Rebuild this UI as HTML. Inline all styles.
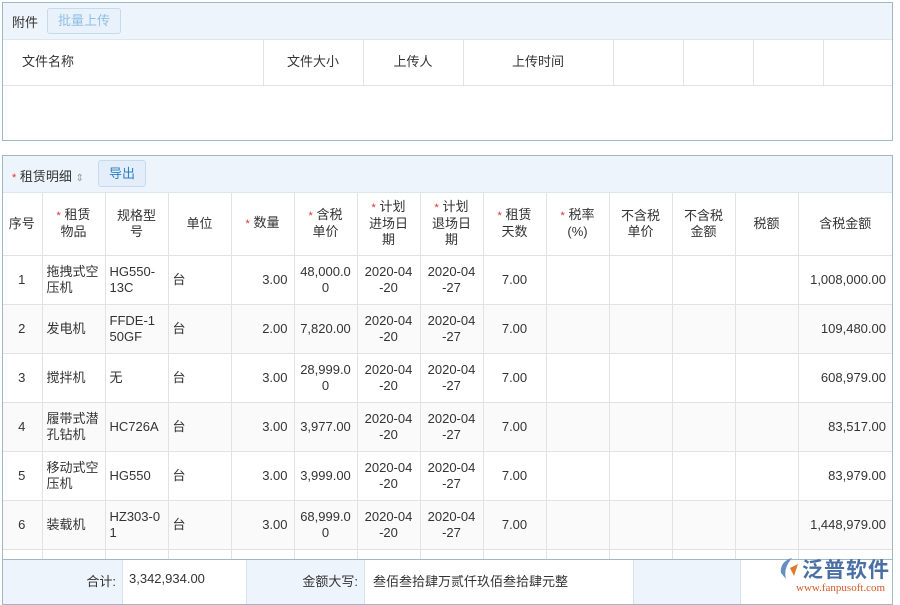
<!DOCTYPE html>
<html><head><meta charset="utf-8"><style>
*{margin:0;padding:0;box-sizing:border-box}
body{width:900px;height:600px;background:#fff;font-family:"Liberation Sans","Noto Sans CJK SC",sans-serif;font-size:13px;color:#333;position:relative;overflow:hidden}
.panel{position:absolute;left:2px;width:891px;border:1px solid #9fb8c8;overflow:hidden}
.bar{background:#eef4fc;border-bottom:1px solid #dde6ee;position:relative}
table{border-collapse:collapse;table-layout:fixed;position:absolute}
td{border:1px solid #e2e2e2;text-align:center;vertical-align:middle;line-height:16px;padding:0 4px}
.s{color:#e03030;font-size:11px}
.btn{position:absolute;border:1px solid #c5daea;border-radius:3px;background:#e3eefa;color:#2b7fc4;text-align:center}
.l{text-align:left}.r{text-align:right;padding-right:6px}
</style></head><body>
<div class="panel" style="top:2px;height:139px">
 <div class="bar" style="height:37px">
  <span style="position:absolute;left:9px;top:9px">附件</span>
  <div class="btn" style="left:44px;top:5px;width:74px;height:26px;line-height:24px;color:#8fc0e6;background:#e9f2fb">批量上传</div>
 </div>
 <table style="left:-1px;top:37px;width:890px">
  <tr style="height:45px"><td class="l" style="width:261px;padding-left:20px;border-left:none;border-top:none">文件名称</td><td style="width:100px;border-top:none">文件大小</td><td style="width:100px;border-top:none">上传人</td><td style="width:150px;border-top:none">上传时间</td><td style="width:70px;border-top:none"></td><td style="width:70px;border-top:none"></td><td style="width:70px;border-top:none"></td><td style="border-top:none;border-right:none"></td></tr>
 </table>
</div>
<div class="panel" style="top:155px;height:450px">
 <div class="bar" style="height:37px">
  <span style="position:absolute;left:9px;top:10px"><span class="s">*</span> 租赁明细 <span style="color:#999;font-size:10px">⇕</span></span>
  <div class="btn" style="left:95px;top:4px;width:48px;height:27px;line-height:25px">导出</div>
 </div>
 <table style="left:-1px;top:37px;width:890px">
  <tr style="height:62px"><td style="width:40px;border-left:none;border-top:none">序号</td><td style="width:63px;border-top:none"><span class="s">*</span> 租赁<br>物品</td><td style="width:63px;border-top:none">规格型<br>号</td><td style="width:63px;border-top:none">单位</td><td style="width:63px;border-top:none"><span class="s">*</span> 数量</td><td style="width:63px;border-top:none"><span class="s">*</span> 含税<br>单价</td><td style="width:63px;border-top:none"><span class="s">*</span> 计划<br>进场日<br>期</td><td style="width:63px;border-top:none"><span class="s">*</span> 计划<br>退场日<br>期</td><td style="width:63px;border-top:none"><span class="s">*</span> 租赁<br>天数</td><td style="width:63px;border-top:none"><span class="s">*</span> 税率<br>(%)</td><td style="width:63px;border-top:none">不含税<br>单价</td><td style="width:63px;border-top:none">不含税<br>金额</td><td style="width:63px;border-top:none">税额</td><td style="border-top:none;border-right:none">含税金额</td></tr>
  <tr style="height:49px"><td style="border-left:none">1</td><td class="l">拖拽式空压机</td><td class="l">HG550-13C</td><td class="l">台</td><td class="r">3.00</td><td>48,000.0<br>0</td><td>2020-04<br>-20</td><td>2020-04<br>-27</td><td>7.00</td><td></td><td></td><td></td><td></td><td class="r" style="border-right:none">1,008,000.00</td></tr>
  <tr style="height:49px;background:#fafafa"><td style="border-left:none">2</td><td class="l">发电机</td><td class="l">FFDE-1<br>50GF</td><td class="l">台</td><td class="r">2.00</td><td>7,820.00</td><td>2020-04<br>-20</td><td>2020-04<br>-27</td><td>7.00</td><td></td><td></td><td></td><td></td><td class="r" style="border-right:none">109,480.00</td></tr>
  <tr style="height:49px"><td style="border-left:none">3</td><td class="l">搅拌机</td><td class="l">无</td><td class="l">台</td><td class="r">3.00</td><td>28,999.0<br>0</td><td>2020-04<br>-20</td><td>2020-04<br>-27</td><td>7.00</td><td></td><td></td><td></td><td></td><td class="r" style="border-right:none">608,979.00</td></tr>
  <tr style="height:49px;background:#fafafa"><td style="border-left:none">4</td><td class="l">履带式潜孔钻机</td><td class="l">HC726A</td><td class="l">台</td><td class="r">3.00</td><td>3,977.00</td><td>2020-04<br>-20</td><td>2020-04<br>-27</td><td>7.00</td><td></td><td></td><td></td><td></td><td class="r" style="border-right:none">83,517.00</td></tr>
  <tr style="height:49px"><td style="border-left:none">5</td><td class="l">移动式空压机</td><td class="l">HG550</td><td class="l">台</td><td class="r">3.00</td><td>3,999.00</td><td>2020-04<br>-20</td><td>2020-04<br>-27</td><td>7.00</td><td></td><td></td><td></td><td></td><td class="r" style="border-right:none">83,979.00</td></tr>
  <tr style="height:49px;background:#fafafa"><td style="border-left:none">6</td><td class="l">装载机</td><td class="l">HZ303-0<br>1</td><td class="l">台</td><td class="r">3.00</td><td>68,999.0<br>0</td><td>2020-04<br>-20</td><td>2020-04<br>-27</td><td>7.00</td><td></td><td></td><td></td><td></td><td class="r" style="border-right:none">1,448,979.00</td></tr>
  <tr style="height:10px"><td style="border-left:none"></td><td></td><td></td><td></td><td></td><td></td><td></td><td></td><td></td><td></td><td></td><td></td><td></td><td style="border-right:none"></td></tr>
 </table>
 <div style="position:absolute;left:-1px;top:403px;width:892px;height:45px;border-top:1px solid #9fb8c8;background:#fff">
  <div style="position:absolute;left:0;top:0;width:120px;height:45px;background:#eef4fc;text-align:right;padding:11px 6px 0 0">合计:</div>
  <div style="position:absolute;left:120px;top:0;width:124px;height:45px;border-left:1px solid #d8e2ea;padding:11px 0 0 6px">3,342,934.00</div>
  <div style="position:absolute;left:244px;top:0;width:118px;height:45px;background:#eef4fc;border-left:1px solid #d8e2ea;text-align:right;padding:11px 6px 0 0">金额大写:</div>
  <div style="position:absolute;left:362px;top:0;width:269px;height:45px;border-left:1px solid #d8e2ea;padding:11px 0 0 8px">叁佰叁拾肆万贰仟玖佰叁拾肆元整</div>
  <div style="position:absolute;left:631px;top:0;width:108px;height:45px;background:#eef4fc;border-left:1px solid #d8e2ea;border-right:1px solid #d8e2ea"></div>
 </div>
</div>
<div style="position:absolute;left:778px;top:552px;width:120px;height:46px">
 <svg style="position:absolute;left:0;top:4px" width="24" height="26" viewBox="0 0 24 26"><path d="M14 2 C6 4 2 10 3 17 L8 23 C6 16 8 9 14 2Z" fill="#6a8fbf"/><path d="M12 12 L20 8 L16 20 Z" fill="#e07a2a"/></svg>
 <div style="position:absolute;left:24px;top:2px;font-size:21px;color:#4a6fa5;letter-spacing:1px;font-weight:bold">泛普软件</div>
 <div style="position:absolute;left:18px;top:30px;font-size:11px;color:#d05a2a;font-family:'Liberation Serif',serif">www.fanpusoft.com</div>
</div>
</body></html>
